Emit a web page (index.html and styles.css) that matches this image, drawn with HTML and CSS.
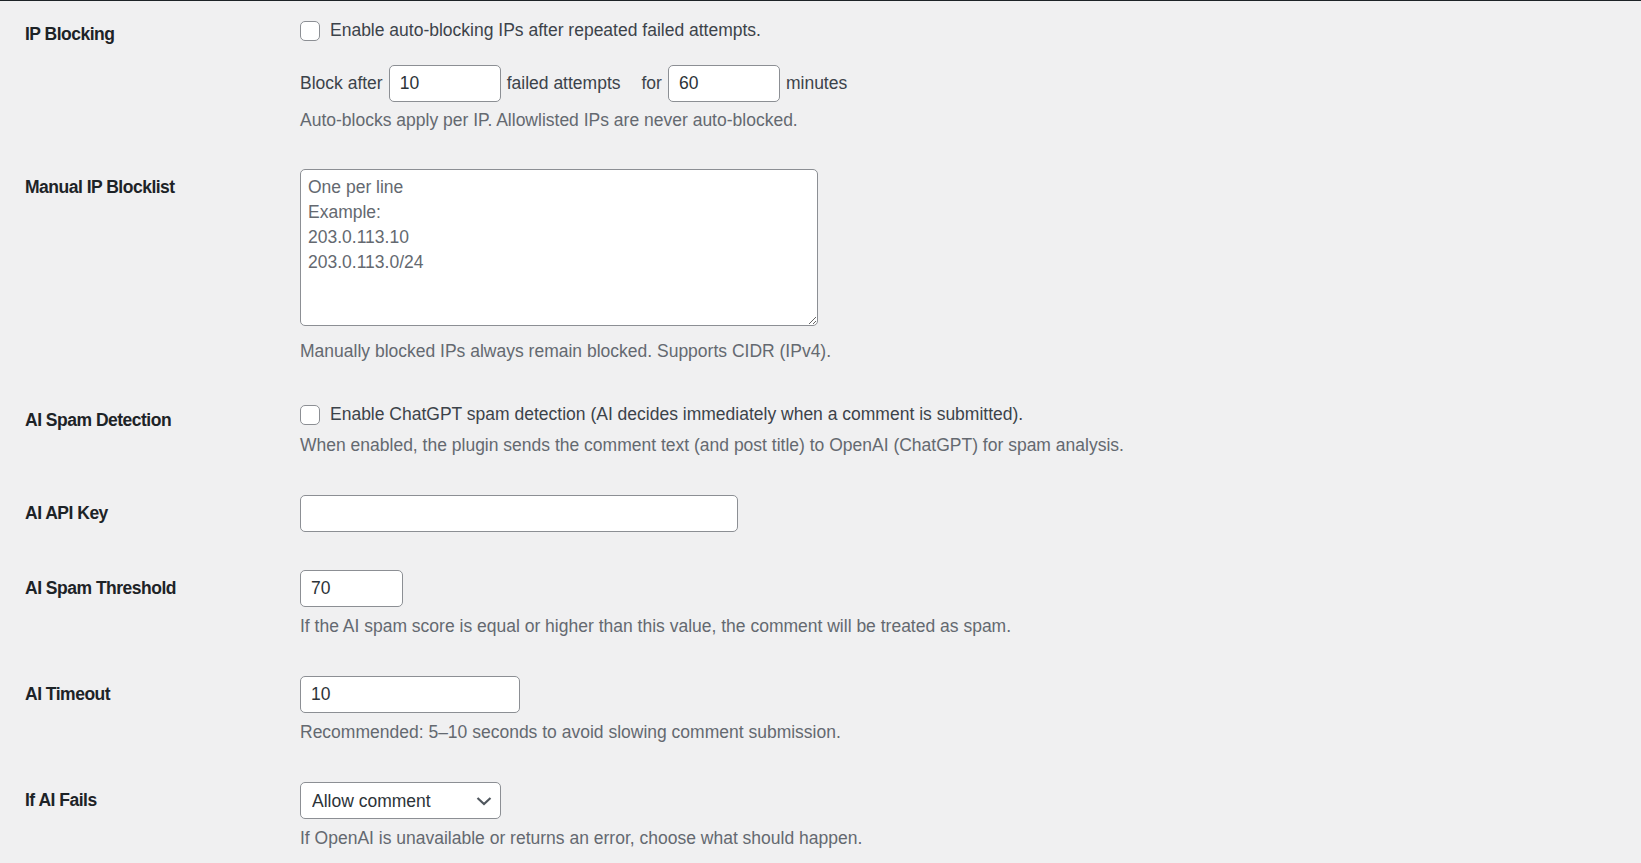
FILE: index.html
```html
<!DOCTYPE html>
<html lang="en">
<head>
    <meta charset="UTF-8">
    <meta name="viewport" content="width=device-width, initial-scale=1.0">
    <title>Spam Protection Settings</title>
    <link rel="stylesheet" href="styles.css">
</head>
<body>

<div class="reglages">

    <div class="ligne premiere">
        <div class="libelle">IP Blocking</div>
        <div class="champ">
            <label class="case"><input type="checkbox"> Enable auto-blocking IPs after repeated failed attempts.</label>
            <p class="en-ligne">
                <span>Block after</span>
                <input type="text" class="court" value="10">
                <span>failed attempts</span>
                <span class="pour">for</span>
                <input type="text" class="court" value="60">
                <span>minutes</span>
            </p>
            <p class="description">Auto-blocks apply per IP. Allowlisted IPs are never auto-blocked.</p>
        </div>
    </div>

    <div class="ligne">
        <div class="libelle">Manual IP Blocklist</div>
        <div class="champ">
            <textarea class="liste" placeholder="One per line&#10;Example:&#10;203.0.113.10&#10;203.0.113.0/24"></textarea>
            <p class="description">Manually blocked IPs always remain blocked. Supports CIDR (IPv4).</p>
        </div>
    </div>

    <div class="ligne">
        <div class="libelle">AI Spam Detection</div>
        <div class="champ">
            <label class="case"><input type="checkbox"> Enable ChatGPT spam detection (AI decides immediately when a comment is submitted).</label>
            <p class="description">When enabled, the plugin sends the comment text (and post title) to OpenAI (ChatGPT) for spam analysis.</p>
        </div>
    </div>

    <div class="ligne">
        <div class="libelle">AI API Key</div>
        <div class="champ">
            <input type="text" class="large">
        </div>
    </div>

    <div class="ligne">
        <div class="libelle">AI Spam Threshold</div>
        <div class="champ">
            <input type="text" class="petit" value="70">
            <p class="description">If the AI spam score is equal or higher than this value, the comment will be treated as spam.</p>
        </div>
    </div>

    <div class="ligne">
        <div class="libelle">AI Timeout</div>
        <div class="champ">
            <input type="text" class="moyen" value="10">
            <p class="description">Recommended: 5–10 seconds to avoid slowing comment submission.</p>
        </div>
    </div>

    <div class="ligne">
        <div class="libelle">If AI Fails</div>
        <div class="champ">
            <span class="menu">
                <select>
                    <option>Allow comment</option>
                    <option>Hold for moderation</option>
                    <option>Mark as spam</option>
                </select>
                <svg class="chevron" width="16" height="10" viewBox="0 0 16 10">
                    <polyline points="1.5,2 8,8 14.5,2" fill="none" stroke="#50575e" stroke-width="2.2"/>
                </svg>
            </span>
            <p class="description">If OpenAI is unavailable or returns an error, choose what should happen.</p>
        </div>
    </div>

</div>

</body>
</html>
```

FILE: styles.css
```css
:root {
    --fond: #f0f0f1;
    --texte: #3c434a;
    --titre: #1d2327;
    --discret: #646970;
    --bordure: #8c8f94;
}

body {
    margin: 0;
    background: var(--fond);
    border-top: 1px solid #1d2327;
    font-family: "Liberation Sans", Arial, sans-serif;
    font-size: 17.5px;
    color: var(--texte);
}

.reglages {
    padding-left: 25px;
}

.ligne {
    display: grid;
    grid-template-columns: 275px 1fr;
}

.libelle {
    padding-top: 26px;
    line-height: 23px;
    font-weight: bold;
    color: var(--titre);
    letter-spacing: -0.5px;
}

.champ {
    padding: 19px 0;
    line-height: 25px;
}

.premiere .libelle {
    padding-top: 22px;
}

.premiere .champ {
    padding-top: 17px;
    padding-bottom: 18px;
}

p {
    margin: 0;
}

.description {
    margin-top: 7px;
    line-height: 24px;
    color: var(--discret);
}

.en-ligne + .description {
    margin-top: 6px;
}

.case + .description {
    margin-top: 6px;
}

.liste + .description {
    margin-top: 8px;
    margin-bottom: 1px;
}

.case {
    display: flex;
    align-items: center;
    gap: 10px;
    color: var(--texte);
}

input[type="checkbox"] {
    appearance: none;
    width: 20px;
    height: 20px;
    margin: 0;
    border: 1px solid var(--bordure);
    border-radius: 5px;
    background: white;
    flex-shrink: 0;
}

input[type="text"],
textarea,
select {
    box-sizing: border-box;
    border: 1px solid var(--bordure);
    border-radius: 5px;
    background: white;
    font-family: "Liberation Sans", Arial, sans-serif;
    font-size: 17.5px;
    color: #2c3338;
    outline: none;
}

input[type="text"] {
    height: 37px;
    padding: 0 10px;
    display: block;
}

.en-ligne {
    display: flex;
    align-items: center;
    gap: 5px;
    margin-top: 22px;
}

.en-ligne .court {
    width: 112px;
    margin: 0 1px;
}

.pour {
    margin-left: 16px;
}

.liste {
    display: block;
    width: 518px;
    height: 157px;
    padding: 5px 7px 2px;
    line-height: 25px;
    margin-bottom: 13px;
}

.liste::placeholder {
    color: var(--discret);
}

.large {
    width: 438px;
}

.petit {
    width: 103px;
}

.moyen {
    width: 220px;
}

.menu {
    position: relative;
    display: inline-block;
}

.menu select {
    appearance: none;
    display: block;
    width: 201px;
    height: 37px;
    padding: 0 34px 0 11px;
}

.chevron {
    position: absolute;
    right: 9px;
    top: 14px;
    pointer-events: none;
}
```
